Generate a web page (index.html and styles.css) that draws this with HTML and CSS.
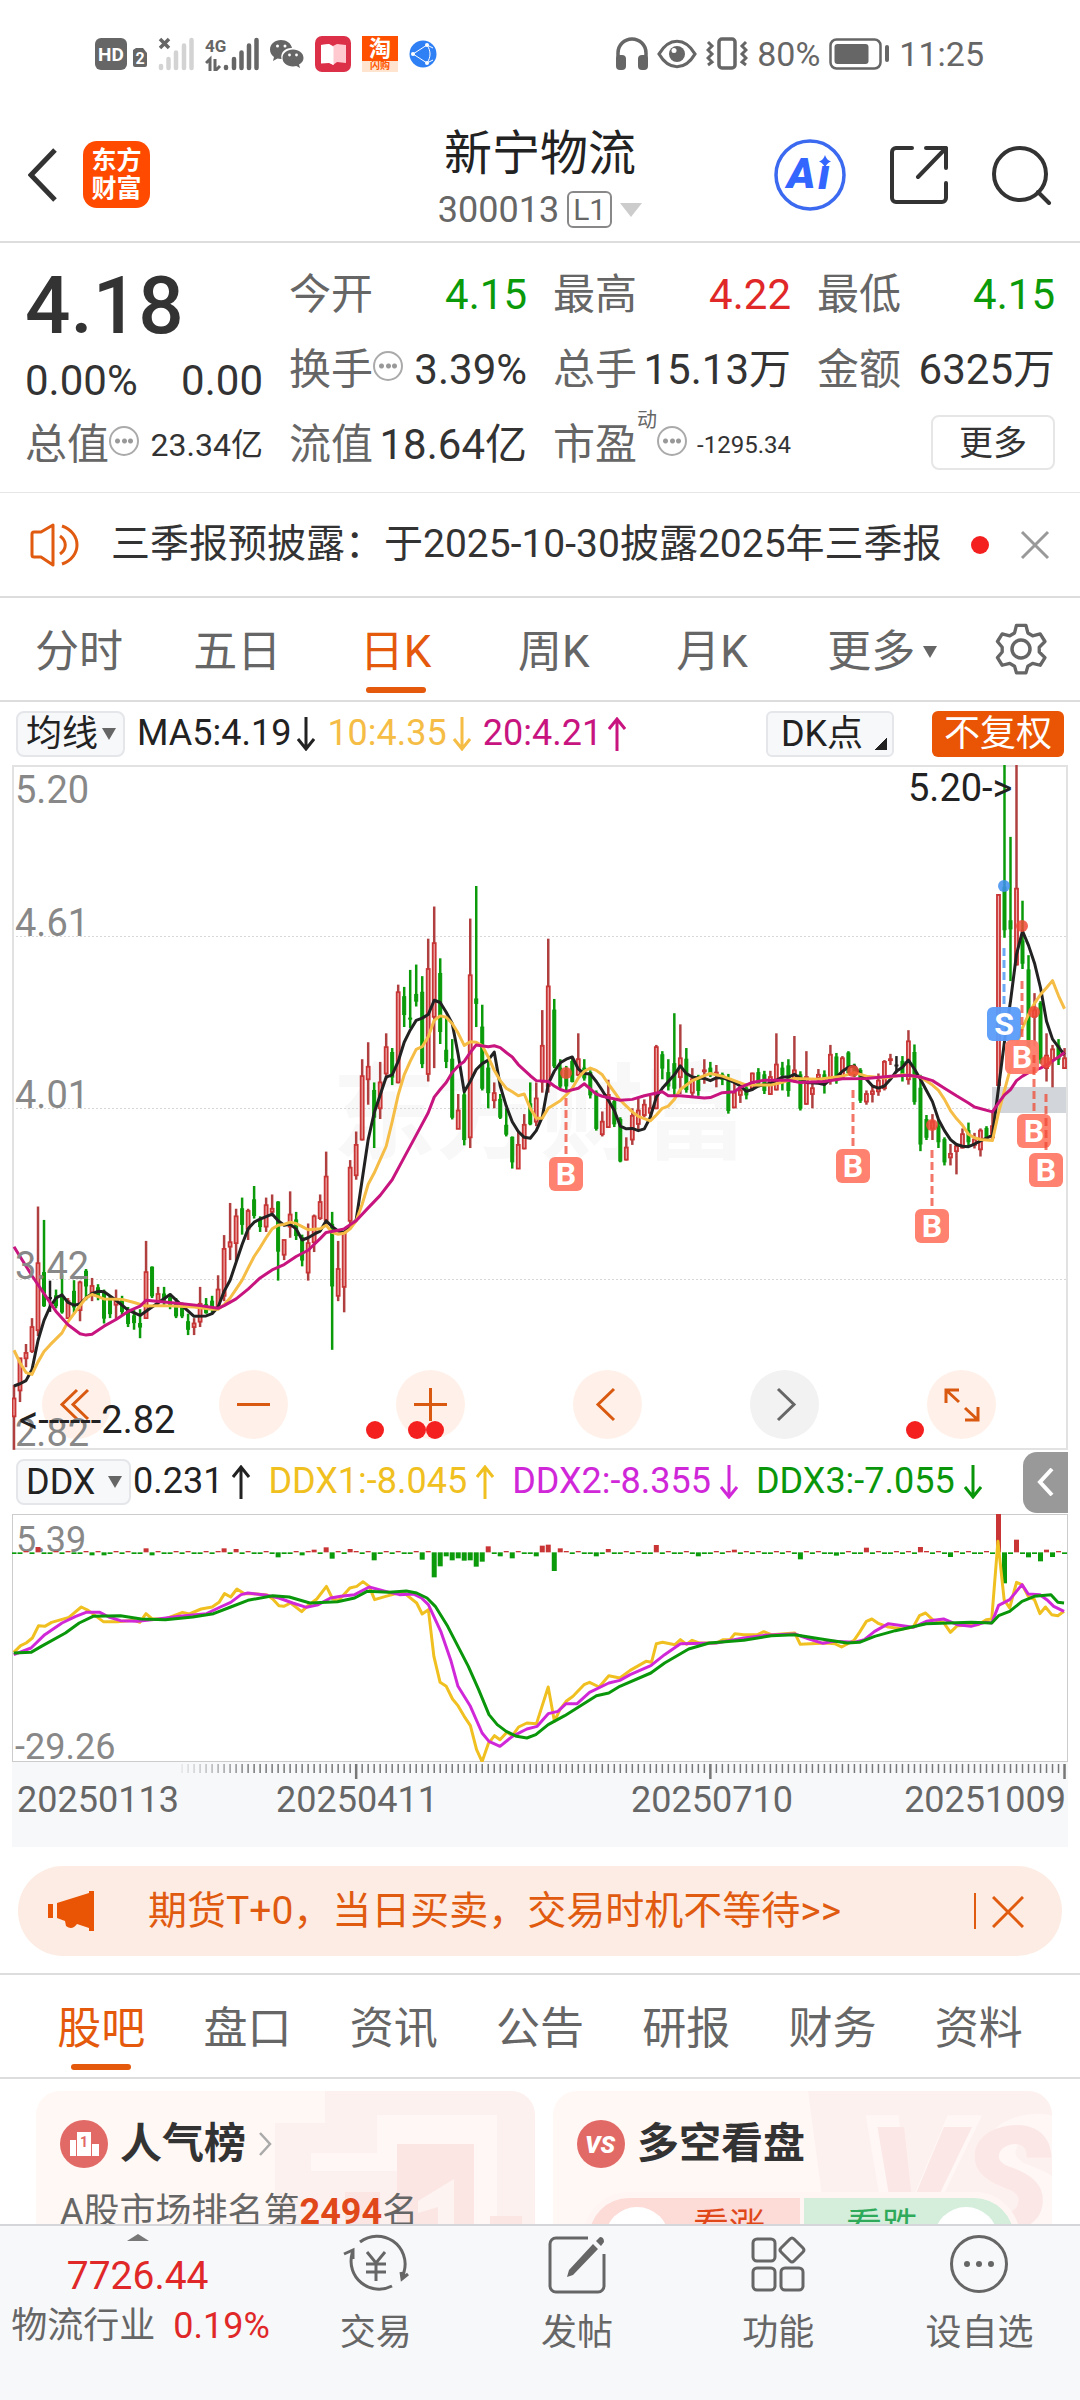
FILE: index.html
```html
<!DOCTYPE html>
<html lang="zh-CN">
<head>
    <meta charset="UTF-8">
    <meta name="viewport" content="width=device-width, initial-scale=1.0">
    <title>新宁物流 300013</title>
    <link rel="stylesheet" href="styles.css">
</head>
<body>
    <!-- Status bar -->
    <div class="status-bar">
        <div class="status-left">
            <svg width="52" height="32" viewBox="0 0 52 32">
                <rect width="32" height="32" rx="6" fill="#666"/>
                <text x="16" y="23" text-anchor="middle" class="hd-text">HD</text>
                <path d="M41 10h7l4 5v12a2 2 0 0 1-2 2h-10a2 2 0 0 1-2-2V12z" fill="#666"/>
                <text x="45" y="26" text-anchor="middle" class="sim-text">2</text>
            </svg>
            <svg width="36" height="34" viewBox="0 0 36 34">
                <path d="M2 2l9 9M11 2l-9 9" stroke="#666" stroke-width="3.5"/>
                <path d="M3 29v2M10.500 22v9M18 15.500v15.500M26 8.500v22.500M33.500 3v28" stroke="#d3d3d3" stroke-width="4.500" stroke-linecap="round"/>
            </svg>
            <svg width="54" height="34" viewBox="0 0 54 34">
                <text x="0" y="15" class="net-text">4G</text>
                <path d="M1 26l4-4v12M10 22v12l5-5" stroke="#666" stroke-width="3" fill="none"/>
                <path d="M21 30v1M29 22v9M36.500 15.500v15.500M44 8.500v22.500M51.500 3v28" stroke="#666" stroke-width="4.500" stroke-linecap="round"/>
            </svg>
            <svg width="34" height="30" viewBox="0 0 34 30">
                <path d="M11 1C5 1 0 5 0 10.500c0 3 1.500 5.500 4 7.500l-1 4 4.500-2.500c1.200.3 2.500.5 4 .4C10 13 16 8.500 22 9 21 4 16.500 1 11 1z" fill="#666"/>
                <path d="M23 10.500c-6 0-10.500 3.600-10.500 8.500S17 27.500 23 27.500c1.200 0 2.300-.2 3.400-.5L30 29l-1-3.500c2.800-1.500 4.500-3.800 4.500-6.500 0-4.900-4.500-8.500-10.500-8.500z" fill="#666"/>
                <g fill="#fff"><circle cx="7.500" cy="7" r="1.500"/><circle cx="15" cy="7" r="1.500"/><circle cx="19.500" cy="16" r="1.400"/><circle cx="26.500" cy="16" r="1.400"/></g>
            </svg>
            <svg width="36" height="36" viewBox="0 0 36 36">
                <rect width="36" height="36" rx="7" fill="#db3048"/>
                <path d="M6 9l8-1 4 2 4-2 9 1v18l-9-1-4 3-4-3-8 1z" fill="#ffc9cf"/>
                <path d="M6 9l8-1 4.500 3v18L14 27l-8 .5z" fill="#fff"/>
            </svg>
            <span class="app-tao"><b>淘</b><small>闪购</small></span>
            <svg width="28" height="28" viewBox="0 0 28 28">
                <circle cx="14" cy="14" r="13.500" fill="#2f80f5"/>
                <path d="M4 14L18 5M4 14l14 9M18 5c4 6 4 12 0 18M18 5l6 3M18 23l6-3" stroke="#fff" fill="none"/>
                <g fill="#fff"><circle cx="4" cy="14" r="2"/><circle cx="18" cy="5" r="2"/><circle cx="18" cy="23" r="2"/></g>
            </svg>
        </div>
        <div class="status-right">
            <svg width="32" height="33" viewBox="0 0 32 33">
                <path d="M2 26V16a14 14 0 0 1 28 0v10" fill="none" stroke="#666" stroke-width="3.500"/>
                <rect x="0" y="18" width="10" height="15" rx="4" fill="#666"/><rect x="22" y="18" width="10" height="15" rx="4" fill="#666"/>
            </svg>
            <svg width="40" height="30" viewBox="0 0 40 30">
                <path d="M2 15C12-2 28-2 38 15 28 32 12 32 2 15z" fill="none" stroke="#666" stroke-width="3.200"/>
                <circle cx="20" cy="15" r="8" fill="#666"/><circle cx="17" cy="11.500" r="2.500" fill="#fff"/>
            </svg>
            <svg width="42" height="33" viewBox="0 0 42 33">
                <rect x="13" y="2" width="16" height="29" rx="3" fill="none" stroke="#666" stroke-width="3.500"/>
                <path d="M2 5l4 4-4 4 4 4-4 4 4 4-4 3M40 5l-4 4 4 4-4 4 4 4-4 4 4 3" fill="none" stroke="#666" stroke-width="3"/>
            </svg>
            <span>80%</span>
            <svg width="61" height="32" viewBox="0 0 61 32">
                <rect x="1.500" y="1.500" width="50" height="29" rx="6" fill="none" stroke="#666" stroke-width="2.500"/>
                <rect x="5.500" y="6" width="34" height="20" rx="3" fill="#666"/><rect x="56" y="7" width="4" height="17" rx="2" fill="#666"/>
            </svg>
            <span class="clock">11:25</span>
        </div>
    </div>

    <!-- Header -->
    <header class="header">
        <div class="header-left">
            <button class="icon-btn" aria-label="返回">
                <svg width="30" height="54" viewBox="0 0 30 54"><path d="M27 2L3 27l24 25" fill="none" stroke="#333" stroke-width="5"/></svg>
            </button>
            <a href="#" class="logo"><span>东方</span><span>财富</span></a>
        </div>
        <div class="header-title">
            <h1>新宁物流</h1>
            <button class="code-btn">300013<span class="level">L1</span><i class="tri tri-big"></i></button>
        </div>
        <div class="header-right">
            <button class="icon-btn" aria-label="AI">
                <svg width="72" height="72" viewBox="0 0 72 72">
                    <circle cx="36" cy="36" r="34" fill="#fff" stroke="#3b69f0" stroke-width="3.500"/>
                    <text x="13" y="49" class="ai-text">A</text><text x="44" y="50" class="ai-text">ı</text>
                    <path d="M51 16q1.500 5 6 6.500-4.500 1.500-6 6.500-1.500-5-6-6.500 4.500-1.500 6-6.500z" fill="#3366ff"/>
                </svg>
            </button>
            <button class="icon-btn" aria-label="分享">
                <svg width="58" height="58" viewBox="0 0 58 58">
                    <path d="M22 2H6a4 4 0 0 0-4 4v46a4 4 0 0 0 4 4h46a4 4 0 0 0 4-4V37M36 2h20v20M56 2L28 31" fill="none" stroke="#333" stroke-width="4" stroke-linecap="round" stroke-linejoin="round"/>
                </svg>
            </button>
            <button class="icon-btn" aria-label="搜索">
                <svg width="60" height="60" viewBox="0 0 60 60">
                    <circle cx="28" cy="29" r="26" fill="none" stroke="#333" stroke-width="4"/>
                    <path d="M46 47l11 11" stroke="#333" stroke-width="4" stroke-linecap="round"/>
                </svg>
            </button>
        </div>
    </header>

    <!-- Quote -->
    <section class="quote">
        <div class="price">
            <strong>4.18</strong>
            <div class="change"><span>0.00%</span><span>0.00</span></div>
        </div>
        <div class="item"><span>今开</span><b class="down">4.15</b></div>
        <div class="item"><span>最高</span><b class="up">4.22</b></div>
        <div class="item"><span>最低</span><b class="down">4.15</b></div>
        <div class="item"><span>换手<i class="more-dot"></i></span><b>3.39%</b></div>
        <div class="item"><span>总手</span><b>15.13万</b></div>
        <div class="item"><span>金额</span><b>6325万</b></div>
        <div class="item"><span>总值<i class="more-dot"></i></span><b class="mid">23.34亿</b></div>
        <div class="item"><span>流值</span><b>18.64亿</b></div>
        <div class="item"><span>市盈<sup>动</sup><i class="more-dot after-sup"></i></span><b class="small">-1295.34</b></div>
        <div class="item last"><button class="more-btn">更多</button></div>
    </section>

    <!-- Notice -->
    <section class="notice">
        <svg width="50" height="44" viewBox="0 0 50 44" fill="none" stroke="#e05a10" stroke-width="3" stroke-linejoin="round">
            <path d="M2 11q0-2 2-2h7L23 2v40L11 34H4q-2 0-2-2zM30 13c7 5 7 13 0 18M32 3c20 7 20 31 0 38"/>
        </svg>
        <a href="#">三季报预披露：于2025-10-30披露2025年三季报</a>
        <i class="red-dot"></i>
        <button class="icon-btn" aria-label="关闭">
            <svg width="30" height="30" viewBox="0 0 30 30"><path d="M2 2l26 26M28 2L2 28" stroke="#999" stroke-width="3"/></svg>
        </button>
    </section>

    <!-- Period tabs -->
    <nav class="tabs period-tabs">
        <button>分时</button>
        <button>五日</button>
        <button class="active">日K</button>
        <button>周K</button>
        <button>月K</button>
        <button class="more-tab">更多<i class="tri"></i></button>
        <button class="gear" aria-label="设置">
            <svg width="52" height="54" viewBox="0 0 52 54" fill="none" stroke="#666" stroke-width="3.500" stroke-linejoin="round">
                <path d="M21 3h10l2 8 5 3 8-2 5 8-6 6v5l6 6-5 8-8-2-5 3-2 7H21l-2-7-5-3-8 2-5-8 5-6v-5l-5-6 5-8 8 2 5-3z" transform="translate(1.500 .5) scale(.95)"/>
                <circle cx="26" cy="27" r="9"/>
            </svg>
        </button>
    </nav>

    <!-- K line chart -->
    <section class="chart">
        <div class="legend">
            <label class="select"><select aria-label="主图指标"><option>均线</option></select></label>
            <span class="ma5">MA5:4.19<svg class="arrow" viewBox="0 0 18 34"><path d="M9 0v32M1 22l8 10 8-10"/></svg></span>
            <span class="ma10">10:4.35<svg class="arrow" viewBox="0 0 18 34"><path d="M9 0v32M1 22l8 10 8-10"/></svg></span>
            <span class="ma20">20:4.21<svg class="arrow" viewBox="0 0 18 34"><path d="M9 34V2M1 12L9 2l8 10"/></svg></span>
            <button class="dk-btn">DK点</button>
            <button class="adjust-btn">不复权</button>
        </div>
        <div class="plot">
            <div class="plot-tools">
                <button aria-label="最早"><svg viewBox="0 0 69 69"><path d="M35 20L20 34.500 35 49M46 20L31 34.500 46 49"/></svg></button>
                <button aria-label="缩小"><svg viewBox="0 0 69 69"><path d="M18 34.500h33"/></svg></button>
                <button aria-label="放大"><svg viewBox="0 0 69 69"><path d="M18 34.500h33M34.500 18v33"/></svg></button>
                <button aria-label="左移"><svg viewBox="0 0 69 69"><path d="M41 19L25 34.500 41 50"/></svg></button>
                <button aria-label="右移" class="off"><svg viewBox="0 0 69 69"><path d="M28 19l16 15.500L28 50"/></svg></button>
                <button aria-label="全屏"><svg viewBox="0 0 69 69"><path d="M19 33V20h13M19 20l13 12M51 37v13H38M51 50L38 38"/></svg></button>
            </div>
            <svg id="kline" viewBox="0 0 1056 685"></svg>
        </div>
        <div class="legend ddx-legend">
            <label class="select"><select aria-label="副图指标"><option>DDX</option></select></label>
            <span class="ma5">0.231<svg class="arrow" viewBox="0 0 18 34"><path d="M9 34V2M1 12L9 2l8 10"/></svg></span>
            <span class="ddx1">DDX1:-8.045<svg class="arrow" viewBox="0 0 18 34"><path d="M9 34V2M1 12L9 2l8 10"/></svg></span>
            <span class="ddx2">DDX2:-8.355<svg class="arrow" viewBox="0 0 18 34"><path d="M9 0v32M1 22l8 10 8-10"/></svg></span>
            <span class="ddx3">DDX3:-7.055<svg class="arrow" viewBox="0 0 18 34"><path d="M9 0v32M1 22l8 10 8-10"/></svg></span>
            <button class="drawer-btn" aria-label="展开">
                <svg width="18" height="28" viewBox="0 0 18 28"><path d="M15 1L3 14l12 13" fill="none" stroke="#fff" stroke-width="4"/></svg>
            </button>
        </div>
        <svg id="ddx" viewBox="0 0 1056 248"></svg>
        <svg id="axis" viewBox="0 0 1056 85"></svg>
    </section>

    <!-- Banner -->
    <aside class="banner">
        <svg width="46" height="40" viewBox="0 0 46 40" fill="#e95504"><path d="M0 13h5v14H0zM9 12L41 2V0h5v40h-5v-3l-12-4q-5 7-11 2l-1-5-8-3z"/></svg>
        <a href="#">期货T+0，当日买卖，交易时机不等待&gt;&gt;</a>
        <button class="icon-btn" aria-label="关闭">
            <svg width="32" height="32" viewBox="0 0 32 32"><path d="M1 1l30 30M31 1L1 31" stroke="#e05a10" stroke-width="3"/></svg>
        </button>
    </aside>

    <!-- Info tabs -->
    <nav class="tabs info-tabs">
        <button class="active">股吧</button>
        <button>盘口</button>
        <button>资讯</button>
        <button>公告</button>
        <button>研报</button>
        <button>财务</button>
        <button>资料</button>
    </nav>

    <main class="cards">
        <article class="card">
            <svg class="card-bg" width="260" height="150" viewBox="0 0 260 150">
                <path d="M50 0h210v150H0V32h50z" fill="#fdf1ef"/>
                <path d="M102 24h120v126h-90V80H36V62h66z" fill="#fef7f5"/>
                <path d="M122 53h77v97h-77zM70 101h35v49H70zM215 125h32v25h-32z" fill="#fbe6e4"/>
                <path d="M143 110l36-22v62h-16v-34l-20 6z" fill="#fdf3f1"/>
            </svg>
            <h2>
                <svg width="48" height="48" viewBox="0 0 48 48">
                    <circle cx="24" cy="24" r="24" fill="#e26a66"/>
                    <path d="M17 12h14v24H17zM10 20h6v16h-6zM32 24h7v12h-7z" fill="#fff"/>
                    <text x="24" y="27" text-anchor="middle" class="rank-text">1</text>
                </svg>
                人气榜
                <svg width="14" height="24" viewBox="0 0 14 24"><path d="M2 1l10 11L2 23" fill="none" stroke="#aaa" stroke-width="2.500"/></svg>
            </h2>
            <p>A股市场排名第<b>2494</b>名</p>
        </article>
        <article class="card">
            <svg class="card-bg" width="244" height="150" viewBox="0 0 244 150">
                <path d="M0 0h244v150H20z" fill="#fdf1ef"/>
                <text x="46" y="152" class="vs-shadow">VS</text>
                <text x="60" y="140" class="vs-bg">VS</text>
            </svg>
            <h2>
                <svg width="48" height="48" viewBox="0 0 48 48">
                    <circle cx="24" cy="24" r="24" fill="#e26a66"/>
                    <text x="23" y="33" text-anchor="middle" class="vs-text">VS</text>
                </svg>
                多空看盘
            </h2>
            <div class="vote">
                <button class="bull"><i></i>看涨</button>
                <button class="bear">看跌<i></i></button>
            </div>
        </article>
    </main>

    <!-- Bottom bar -->
    <footer class="bottom-bar">
        <a href="#" class="index">
            <i class="tri-up"></i>
            <span class="index-value">7726.44</span>
            <span class="index-name">物流行业<b>0.19%</b></span>
        </a>
        <a href="#">
            <svg viewBox="0 0 66 60">
                <path d="M17 8a28 28 0 0 1 44 30l-1 5M49 52A28 28 0 0 1 9 20l1-3M1 20l9-4v9M65 40l-6 5-1-7M24 18l9 11 9-11M33 29v18M23 30h20M23 38h20"/>
            </svg>
            交易
        </a>
        <a href="#">
            <svg viewBox="0 0 66 60">
                <path d="M44 4H12a6 6 0 0 0-6 6v42a6 6 0 0 0 6 6h42a6 6 0 0 0 6-6V20"/>
                <path d="M49 10l5 5-25 26-6 2 2-7zM52 7l4-4q4 0 4 5l-3 4z" fill="#666" stroke="none"/>
            </svg>
            发帖
        </a>
        <a href="#">
            <svg viewBox="0 0 66 60">
                <rect x="8" y="5" width="22" height="22" rx="4"/><rect x="8" y="34" width="22" height="22" rx="4"/><rect x="36" y="34" width="22" height="22" rx="4"/>
                <path d="M45 5q2-2 4 0l9 9q2 2 0 4l-9 9q-2 2-4 0l-9-9q-2-2 0-4z"/>
            </svg>
            功能
        </a>
        <a href="#">
            <svg viewBox="0 0 66 60">
                <circle cx="33" cy="30" r="27.500"/>
                <g fill="#666" stroke="none"><circle cx="21" cy="30" r="3"/><circle cx="33" cy="30" r="3"/><circle cx="45" cy="30" r="3"/></g>
            </svg>
            设自选
        </a>
    </footer>

    <script src="chart.js"></script>
</body>
</html>
```

FILE: styles.css
```css
* {
    box-sizing: border-box;
}
body {
    margin: 0;
    height: 100vh;
    display: flex;
    flex-direction: column;
    overflow: hidden;
    background: #fff;
    color: #333;
    font-family: Roboto, "Noto Sans CJK SC", sans-serif;
    line-height: 1.2;
}
body > * {
    flex-shrink: 0;
}
button, select {
    font: inherit;
    color: inherit;
    border: 0;
    padding: 0;
    margin: 0;
    background: none;
    cursor: pointer;
}
a {
    color: inherit;
    text-decoration: none;
}
h1, h2, p {
    margin: 0;
}
svg {
    display: block;
}
.icon-btn {
    display: block;
}

/* triangles */
.tri {
    display: inline-block;
    border: 7px solid transparent;
    border-top: 12px solid #666;
    border-bottom: 0;
}
.tri-big {
    border-width: 14px 11px 0;
    border-top-color: #ccc;
}

/* status bar */
.status-bar {
    height: 108px;
    padding: 0 96px 0 95px;
    display: flex;
    align-items: center;
    justify-content: space-between;
    color: #666;
    font-size: 34px;
}
.status-left, .status-right {
    display: flex;
    align-items: center;
    gap: 11px;
}
.status-right {
    gap: 9px;
}
.hd-text, .sim-text {
    fill: #fff;
    font-weight: 700;
    font-size: 19px;
}
.sim-text {
    font-size: 16px;
}
.net-text {
    fill: #666;
    font-weight: 700;
    font-size: 17px;
}
.app-tao {
    width: 36px;
    height: 36px;
    display: flex;
    flex-direction: column;
    align-items: center;
    background: linear-gradient(#ff5000 70%, #ffe5cf 70%);
    color: #fff;
    line-height: 25px;
}
.app-tao b {
    font-size: 22px;
}
.app-tao small {
    font-size: 10px;
    line-height: 10px;
    color: #f50;
    font-weight: 700;
}

/* header */
.header {
    height: 135px;
    padding: 0 28px;
    display: grid;
    grid-template-columns: 1fr auto 1fr;
    align-items: center;
    border-bottom: 2px solid #ddd;
}
.header-left {
    display: flex;
    align-items: center;
    gap: 25px;
}
.logo {
    width: 67px;
    height: 67px;
    border-radius: 14px;
    background: #ff4a00;
    color: #fff;
    font-size: 25px;
    font-weight: 700;
    line-height: 28px;
    display: flex;
    flex-direction: column;
    align-items: center;
    justify-content: center;
}
.header-title {
    padding-top: 10px;
    text-align: center;
}
.header-title h1 {
    font-size: 48px;
    font-weight: 400;
    line-height: 60px;
    color: #222;
}
.code-btn {
    display: flex;
    align-items: center;
    gap: 8px;
    font-size: 36px;
    line-height: 52px;
    color: #666;
}
.level {
    padding: 0 4px;
    border: 2px solid #888;
    border-radius: 6px;
    font-size: 30px;
    line-height: 33px;
}
.header-right {
    display: flex;
    align-items: center;
    justify-content: flex-end;
    gap: 44px;
}
.ai-text {
    fill: #3366ff;
    font-size: 43px;
    font-weight: 900;
    font-style: italic;
}

/* quote */
.quote {
    padding: 15px 25px 9px;
    display: grid;
    grid-template-columns: repeat(4, 1fr);
    grid-auto-rows: 75px;
    column-gap: 26px;
    font-size: 42px;
    border-bottom: 1px solid #e6e6e6;
}
.price {
    grid-row: span 2;
    padding-top: 6px;
}
.price strong {
    display: block;
    font-size: 80px;
    font-weight: 500;
    line-height: 84px;
}
.change {
    display: flex;
    justify-content: space-between;
    line-height: 66px;
}
.item {
    display: flex;
    align-items: center;
    justify-content: space-between;
    white-space: nowrap;
}
.item span {
    position: relative;
    display: flex;
    align-items: center;
    color: #666;
}
.item b {
    font-weight: 400;
}
.item.last {
    justify-content: flex-end;
}
.item .mid {
    font-size: 32px;
}
.item .small {
    font-size: 24px;
}
.item .up {
    color: #e02828;
}
.item .down {
    color: #0a9a0a;
}
.item sup {
    align-self: flex-start;
    margin-top: -10px;
    font-size: 20px;
    line-height: 20px;
}
.more-dot {
    width: 30px;
    height: 30px;
    margin: 0 0 8px;
    border: 2px solid #aaa;
    border-radius: 50%;
    background: radial-gradient(circle, #999 2px, transparent 3px) center / 7px 100% no-repeat,
        radial-gradient(circle, #999 2px, transparent 3px) 3px 50% / 7px 100% no-repeat,
        radial-gradient(circle, #999 2px, transparent 3px) 16px 50% / 7px 100% no-repeat;
}
.more-btn {
    width: 124px;
    height: 55px;
    margin-bottom: 6px;
    border: 2px solid #e6e6e6;
    border-radius: 8px;
    font-size: 34px;
    line-height: 48px;
}

/* notice */
.notice {
    height: 105px;
    padding: 0 30px;
    display: flex;
    align-items: center;
    border-bottom: 2px solid #ddd;
    font-size: 39px;
}
.notice a {
    flex: 1;
    margin-left: 31px;
    white-space: nowrap;
}
.red-dot {
    width: 18px;
    height: 18px;
    margin-right: 31px;
    border-radius: 50%;
    background: #f42020;
}

/* tabs */
.tabs {
    display: flex;
    height: 104px;
    border-bottom: 2px solid #ddd;
    font-size: 44px;
    color: #666;
}
.tabs button {
    position: relative;
    flex: 8;
    display: flex;
    align-items: center;
    justify-content: center;
    gap: 8px;
    padding-top: 6px;
}
.tabs .more-tab {
    padding-left: 12px;
}
.tabs .gear {
    flex: 6;
    padding-top: 0;
}
.tabs .active {
    color: #e4590c;
}
.tabs .active::after {
    content: "";
    position: absolute;
    left: 50%;
    bottom: 7px;
    width: 60px;
    height: 6px;
    margin-left: -30px;
    border-radius: 3px;
    background: #e4590c;
}
.info-tabs {
    height: 106px;
    padding: 0 28px;
    border-top: 2px solid #ddd;
}

/* chart */
.chart {
    padding: 0 12px;
}
.chart > svg, .plot > svg {
    width: 100%;
    height: auto;
}
.legend {
    height: 63px;
    padding-left: 4px;
    display: flex;
    align-items: center;
    gap: 12px;
    font-size: 36px;
    white-space: nowrap;
    color: #222;
}
.legend span {
    display: flex;
    align-items: center;
}
.select {
    position: relative;
    height: 46px;
    border: 2px solid #e4e6ea;
    border-radius: 8px;
    background: #f7f8fa;
}
.select select {
    height: 42px;
    padding: 0 24px 0 8px;
    appearance: none;
}
.select::after {
    content: "";
    position: absolute;
    right: 7px;
    top: 15px;
    border: 7px solid transparent;
    border-top: 12px solid #666;
    border-bottom: 0;
    pointer-events: none;
}
.arrow {
    width: 18px;
    height: 34px;
    margin-left: 6px;
    fill: none;
    stroke: currentColor;
    stroke-width: 3;
}
.ma10 {
    color: #f5bd45;
}
.ma20 {
    color: #c8147f;
}
.dk-btn, .adjust-btn {
    height: 46px;
    border-radius: 6px;
    line-height: 40px;
}
.dk-btn {
    width: 128px;
    margin-left: auto;
    padding-right: 16px;
    border: 2px solid #e4e6ea;
    background: linear-gradient(135deg, transparent 50%, #222 50%) right 5px bottom 5px / 12px 12px no-repeat #f7f8fa;
}
.adjust-btn {
    width: 132px;
    margin: 0 4px 0 26px;
    background: #e95504;
    color: #fff;
}
.ddx-legend {
    height: 64px;
    gap: 18px;
}
.ddx-legend .select {
    margin-right: -16px;
}
.ddx-legend .select select {
    padding-right: 33px;
}
.ddx-legend .arrow {
    margin-left: 9px;
}
.ddx1 {
    color: #f0c020;
}
.ddx2 {
    color: #d028d8;
}
.ddx3 {
    color: #0a960a;
}
.drawer-btn {
    width: 45px;
    height: 61px;
    margin-left: auto;
    display: flex;
    align-items: center;
    justify-content: center;
    border-radius: 14px 0 0 14px;
    background: #999;
}
.plot {
    position: relative;
}
.plot > svg {
    position: relative;
    pointer-events: none;
}
.plot-tools {
    position: absolute;
    left: 30px;
    right: 72px;
    bottom: 11px;
    display: flex;
    justify-content: space-between;
}
.plot-tools button {
    width: 69px;
    height: 69px;
    border-radius: 50%;
    background: #fff1e9;
}
.plot-tools path {
    fill: none;
    stroke: #d8590f;
    stroke-width: 3;
}
.plot-tools .off {
    background: #f2f2f2;
}
.plot-tools .off path {
    stroke: #666;
}
.scale-text {
    fill: #888;
    font-size: 38px;
}
.mark-text {
    fill: #222;
    font-size: 38px;
}
.ddx-text {
    fill: #888;
    font-size: 36px;
}
.date-text {
    fill: #666;
    font-size: 36px;
}
.badge-text {
    fill: #fff;
    font-size: 32px;
    font-weight: 700;
}
.watermark {
    fill: #f8f8f8;
    font-size: 104px;
    font-weight: 700;
}
#axis {
    background: #f7f8fa;
}

/* banner */
.banner {
    height: 90px;
    margin: 19px 18px 17px;
    padding: 0 38px 0 30px;
    display: flex;
    align-items: center;
    border-radius: 45px;
    background: #fdece3;
    color: #e05a10;
    font-size: 39px;
}
.banner a {
    flex: 1;
    margin-left: 54px;
}
.banner button {
    height: 36px;
    padding: 2px 0 0 16px;
    border-left: 2px solid #e05a10;
}

/* cards */
.cards {
    flex: 1;
    min-height: 0;
    padding: 12px 28px 0 36px;
    display: grid;
    grid-template-columns: 1fr 1fr;
    gap: 18px;
    overflow: hidden;
}
.card {
    position: relative;
    height: 300px;
    padding: 24px;
    border-radius: 24px;
    overflow: hidden;
    background: #fff8f5;
}
.card-bg {
    position: absolute;
    top: 0;
    right: 0;
}
.card h2 {
    position: relative;
    display: flex;
    align-items: center;
    gap: 12px;
    height: 58px;
    font-size: 42px;
    font-weight: 700;
}
.card p {
    position: relative;
    margin-top: 12px;
    font-size: 36px;
    line-height: 54px;
    color: #666;
}
.card p b {
    color: #e0481a;
}
.rank-text {
    fill: #e26a66;
    font-size: 14px;
    font-weight: 700;
}
.vs-text {
    fill: #fff;
    font-size: 24px;
    font-weight: 900;
    font-style: italic;
}
.vs-bg, .vs-shadow {
    fill: #fbe7e5;
    font-size: 146px;
    font-weight: 900;
    font-style: italic;
}
.vs-shadow {
    fill: #fef7f5;
    font-size: 180px;
}
.vote {
    position: relative;
    display: flex;
    margin: 19px 8px 0 6px;
    border: 6px solid #fff6f4;
    border-radius: 50px;
    overflow: hidden;
    font-size: 36px;
    background: #fff6f4;
    gap: 4px;
}
.vote button {
    flex: 1;
    height: 80px;
    padding: 9px 16px 0;
    display: flex;
    align-items: flex-start;
    gap: 24px;
    line-height: 40px;
}
.vote i {
    width: 64px;
    height: 64px;
    border-radius: 50%;
    background: #fff;
}
.bull {
    background: #fddcd8;
    color: #e0481a;
}
.vote .bear {
    justify-content: flex-end;
    gap: 16px;
    background: #d4eedb;
    color: #2fa95a;
}

/* bottom bar */
.bottom-bar {
    height: 176px;
    display: flex;
    border-top: 2px solid #d4d6da;
    background: #f7f8fa;
    color: #666;
    font-size: 36px;
}
.bottom-bar a {
    flex: 201;
    padding-top: 8px;
    display: flex;
    flex-direction: column;
    align-items: center;
    gap: 14px;
    line-height: 50px;
}
.bottom-bar .index {
    flex: 275;
    gap: 0;
    line-height: 50px;
    white-space: nowrap;
}
.bottom-bar svg {
    width: 66px;
    height: 60px;
    fill: none;
    stroke: #666;
    stroke-width: 3;
}
.tri-up {
    border: 11px solid transparent;
    border-bottom: 7px solid #777;
    border-top: 0;
    margin-bottom: 10px;
}
.index-value {
    font-size: 39px;
    color: #e02828;
}
.index-name {
    padding-left: 6px;
}
.index-name b {
    margin-left: 18px;
    font-weight: 400;
    color: #e02828;
}
```

FILE: chart.js
```javascript
const STEP = 6.003;
const RED = '#c93434';
const GREEN = '#0a9a0a';

function add(svg, tag, attrs, text) {
    const el = document.createElementNS('http://www.w3.org/2000/svg', tag);
    for (const key in attrs) el.setAttribute(key, attrs[key]);
    if (text) el.textContent = text;
    svg.appendChild(el);
    return el;
}

// one candle: colour, high, body top, body bottom, low (depth units, 11 = top of plot, 1545 = bottom)
const candles = `r 1400 1430 1470 1545|r 1340 1340 1412 1438|r 1308 1328 1340 1360|r 1250 1270 1324 1328|r 1000 1127 1277 1290
g 1030 1148 1222 1225|k 1166 1204 1205 1236|g 1186 1200 1222 1228|g 1152 1200 1236 1240|r 1205 1212 1250 1252
g 1165 1190 1225 1240|r 1166 1170 1232 1257|g 1140 1145 1178 1210|r 1160 1178 1192 1212|g 1174 1182 1200 1210
g 1186 1195 1250 1262|g 1200 1205 1240 1250|r 1186 1212 1220 1252|g 1200 1210 1235 1245|g 1225 1232 1262 1270
g 1232 1245 1260 1276|g 1230 1262 1270 1295|r 1077 1147 1250 1252|g 1134 1136 1200 1205|r 1180 1196 1212 1225
g 1180 1196 1210 1222|g 1195 1205 1222 1230|g 1205 1215 1245 1250|g 1215 1222 1245 1250|g 1240 1258 1275 1288
r 1250 1262 1270 1288|r 1180 1218 1258 1270|g 1205 1220 1238 1240|g 1200 1212 1230 1240|r 1154 1186 1225 1230
r 1064 1095 1200 1212|r 992 1080 1090 1120|r 1005 1022 1082 1122|g 980 1005 1040 1063|r 1005 1010 1050 1075
g 954 985 1020 1027|g 1022 1030 1045 1057|r 980 997 1045 1057|r 973 1005 1012 1022|g 988 990 1100 1166
r 1075 1075 1108 1120|r 966 1018 1045 1070|g 1012 1030 1065 1075|g 1063 1070 1120 1134|r 1038 1082 1148 1166
r 1018 1022 1080 1102|r 973 990 1026 1030|r 877 933 1030 1045|g 1012 1040 1178 1321|r 1077 1140 1200 1212
r 1055 1060 1180 1237|r 896 913 1032 1045|r 832 862 930 940|r 670 708 850 852|r 632 687 715 772
g 722 740 800 869|r 676 722 780 804|r 612 643 702 715|g 645 655 710 728|r 503 520 722 724
g 508 530 570 598|g 470 578 580 600|g 458 525 540 552|g 484 520 680 690|r 400 468 703 720
r 328 410 575 690|g 444 478 608 636|g 575 650 675 690|g 625 670 800 805|r 748 785 826 826
g 740 750 850 863|r 355 482 845 869|g 282 535 545 598|g 548 598 735 740|g 670 690 745 780
r 722 746 762 780|g 748 760 800 804|g 780 818 838 843|g 843 845 900 915|r 830 862 915 915
r 793 817 870 872|g 722 770 815 818|r 722 758 810 820|r 560 640 720 745|r 400 507 730 745
g 535 560 685 690|g 670 690 730 735|g 685 695 730 740|g 668 675 720 722|r 612 670 705 708
g 670 690 712 718|g 695 700 750 758|g 740 745 825 830|r 787 810 838 843|r 716 750 822 824
g 760 765 815 822|g 800 805 898 901|r 845 868 895 897|r 780 797 850 862|r 758 785 815 830
r 760 772 795 800|r 752 780 790 800|r 638 643 780 782|g 652 660 690 715|g 670 700 730 740
g 567 680 735 752|r 592 668 710 748|g 645 670 738 745|r 690 715 745 757|g 705 710 740 752
r 670 695 697 725|g 676 690 705 710|r 683 700 702 733|g 700 705 715 728|g 703 720 785 792
r 720 745 778 780|r 735 740 750 768|g 725 735 750 760|r 700 702 735 740|g 690 700 730 733
g 696 705 740 748|r 696 710 748 750|r 612 682 738 740|g 676 690 705 740|g 670 685 740 754
r 618 695 715 722|g 697 705 780 785|r 652 710 770 772|r 718 735 748 780|r 692 705 712 722
g 695 705 725 747|r 638 660 710 727|g 656 665 718 725|r 663 668 710 712|g 652 656 700 702
g 680 690 705 710|g 690 695 762 768|r 740 748 765 772|r 732 742 748 767|r 702 718 742 752
r 672 676 735 740|r 658 670 672 683|k 663 683 684 700|g 663 675 705 720|r 605 630 715 727
g 637 655 765 772|g 705 735 860 876|g 795 805 845 851|r 793 810 825 851|g 805 820 855 869
g 845 850 900 908|r 860 882 890 908|r 858 865 876 928|r 825 838 868 870|g 812 830 855 865
r 835 850 862 870|r 825 830 872 888|g 820 825 845 850|r 790 820 845 850|r 300 302 728 730
g 11 285 380 398|g 172 360 378 495|r 11 288 458 460|g 315 405 455 468|g 437 470 650 660
r 522 560 575 640|g 540 545 670 680|r 612 662 690 720|r 638 648 672 733|g 625 640 670 683
r 645 668 690 690`.split(/[|\n]/);

// moving averages: day index, depth
const averages = {
    '#222': '0 1402,1 1397,2 1390,3 1365,4 1300,5 1255,6 1225,7 1205,8 1198,9 1215,10 1221,11 1218,12 1205,13 1195,14 1190,15 1191,17 1210,19 1232,21 1244,23 1225,26 1197,28 1222,30 1246,32 1245,33 1240,34 1225,35 1190,36 1165,37 1125,38 1085,39 1050,40 1035,41 1028,43 1017,44 1032,45 1042,46 1040,47 1050,48 1075,49 1070,50 1062,51 1055,52 1032,53 1045,54 1055,55 1058,56 1045,57 1030,58 940,59 850,60 790,61 750,62 710,63 705,64 675,65 632,66 605,67 583,68 578,69 570,70 538,71 543,72 565,73 590,74 660,75 743,76 720,77 693,78 680,79 672,80 654,81 730,82 775,83 810,84 832,85 845,86 847,87 830,88 800,89 725,90 697,91 678,92 670,93 665,94 692,95 702,96 703,97 720,98 740,99 762,100 785,101 820,102 826,103 825,104 830,105 826,106 800,107 755,108 735,109 720,110 705,111 685,112 702,113 710,114 712,115 713,116 718,117 712,118 711,120 722,121 730,122 742,123 738,124 730,126 724,128 710,129 710,130 704,131 712,132 722,134 724,135 727,136 715,137 710,138 697,139 688,140 685,141 705,142 715,143 730,144 735,145 730,146 715,147 697,148 688,149 672,150 692,151 715,152 740,153 765,154 805,155 830,156 850,157 861,158 865,159 866,160 860,161 853,162 847,163 840,164 735,165 630,166 540,167 435,168 383,169 415,170 455,171 510,172 585,173 625,174 643,175 660',
    '#f5bd45': '0 1322,1 1350,2 1372,3 1376,4 1348,5 1325,6 1310,8 1283,9 1258,10 1240,11 1222,12 1205,13 1197,15 1207,18 1208,20 1215,22 1223,25 1222,30 1225,33 1230,34 1230,35 1220,36 1205,37 1185,38 1165,39 1138,40 1112,41 1092,42 1070,43 1050,44 1042,45 1040,46 1035,47 1038,48 1045,49 1052,51 1050,52 1042,53 1058,54 1062,55 1060,56 1050,57 1032,58 995,59 950,60 925,61 895,62 865,63 810,64 750,65 705,66 675,67 648,68 642,69 620,70 583,71 573,72 576,73 590,74 612,75 639,76 631,77 632,78 640,79 665,80 695,81 718,82 735,83 743,84 752,85 748,86 780,87 802,88 802,89 780,91 763,92 750,93 735,94 712,95 697,96 690,97 695,98 705,99 725,101 762,102 775,103 788,104 798,106 808,107 795,108 780,109 775,110 760,111 738,113 718,115 707,116 702,118 708,120 718,122 728,124 728,126 728,128 722,130 713,134 715,138 708,140 700,142 708,145 712,148 705,151 710,153 728,154 740,155 760,156 785,157 803,158 818,159 838,160 846,161 850,163 852,164 790,165 740,166 690,167 640,168 600,169 570,170 545,171 525,172 510,173 494,174 528,175 557',
    '#c8147f': '0 1090,1 1112,3 1155,5 1195,7 1235,9 1265,11 1285,12 1288,13 1286,15 1268,17 1253,19 1235,21 1223,22 1210,25 1214,28 1218,31 1222,34 1228,35 1222,37 1207,39 1185,41 1160,43 1142,45 1130,47 1112,49 1098,51 1072,52 1058,54 1053,55 1050,57 1032,59 1003,61 975,63 940,65 890,67 840,69 790,70 755,71 738,72 722,73 700,74 685,75 675,76 655,77 638,79 642,80 640,81 644,82 655,83 665,84 682,86 707,87 718,89 720,90 730,91 738,92 742,94 735,95 725,97 748,98 753,101 762,103 760,105 752,108 743,109 752,111 752,115 757,116 756,118 745,120 743,121 733,123 722,125 717,129 717,131 722,135 720,138 714,142 713,146 708,149 706,151 710,153 718,155 735,157 752,159 768,160 777,163 788,164 768,165 750,166 738,167 718,168 708,169 700,171 690,172 683,174 665,175 655'
};

// buy / sell marks: letter, x, dot y, badge top
const marks = [
    ['B', 554, 308, 392], ['B', 841, 306, 384], ['B', 920, 360, 444],
    ['S', 992, 121, 242], ['B', 1010, 161, 275], ['B', 1022, 247, 349], ['B', 1034, 297, 388]
];

const dayX = i => 2 + i * STEP;
const depthY = v => (v - 11) / 2.24;

function drawKline() {
    const svg = document.getElementById('kline');
    add(svg, 'text', { x: 320, y: 386, class: 'watermark' }, '东方财富');
    [171, 343, 514].forEach(y => add(svg, 'path', { d: `M0 ${y}.500H1056`, stroke: '#d8d8d8', 'stroke-dasharray': '2 2' }));
    add(svg, 'rect', { x: 980, y: 322, width: 75, height: 26, fill: '#d2d6da' });
    add(svg, 'rect', { x: 1, y: 1, width: 1054, height: 683, fill: 'none', stroke: '#e2e2e2', 'stroke-width': 2 });

    candles.forEach((row, i) => {
        const [c, ...v] = row.split(' ');
        const [high, top, bottom, low] = v.map(n => depthY(+n));
        const x = dayX(i);
        const color = { r: RED, g: GREEN, k: '#222' }[c];
        add(svg, 'path', { d: `M${x} ${high}V${low}`, stroke: c === 'r' ? '#b04040' : color, 'stroke-width': 2.5 });
        add(svg, 'rect', {
            x: x - 1.5, y: top, width: 3, height: Math.max(1, bottom - top),
            fill: c === 'r' ? '#eeb0b0' : color, stroke: color, 'stroke-width': c === 'r' ? 1.8 : 1
        });
    });

    for (const color in averages) {
        const points = averages[color].split(',').map(p => {
            const [i, v] = p.split(' ');
            return dayX(+i) + ',' + depthY(+v);
        }).join(' ');
        add(svg, 'polyline', { points, fill: 'none', stroke: color, 'stroke-width': 3, 'stroke-linejoin': 'round' });
    }

    marks.forEach(([t, x, dot, top]) => {
        const color = t === 'S' ? '#3d8ef0' : '#f04a36';
        add(svg, 'circle', { cx: x, cy: dot, r: 6, fill: color, opacity: .85 });
        add(svg, 'path', { d: `M${x} ${top - 59}V${top}`, stroke: color, 'stroke-width': 3, 'stroke-dasharray': '8 4', opacity: .75 });
        add(svg, 'rect', { x: x - 17, y: top, width: 34, height: 34, rx: 6, fill: t === 'S' ? '#5a9cfa' : '#ff7a68', opacity: .95 });
        add(svg, 'text', { x, y: top + 28, 'text-anchor': 'middle', class: 'badge-text' }, t);
    });

    [['5.20', 38], ['4.61', 171], ['4.01', 343], ['3.42', 514], ['2.82', 681]].forEach(([t, y]) =>
        add(svg, 'text', { x: 3, y, class: 'scale-text' }, t));
    add(svg, 'text', { x: 896, y: 36, class: 'mark-text' }, '5.20->');
    add(svg, 'text', { x: 7, y: 668, class: 'mark-text' }, '<------2.82');
    [363, 405, 423, 903].forEach(x => add(svg, 'circle', { cx: x, cy: 665, r: 9, fill: '#f42020' }));
}

// tall ddx bars: day index, end of the bar (zero line is 338)
const bars = {
    4: 322, 13: 347, 15: 347, 22: 326, 23: 347, 35: 326, 37: 328, 44: 353, 48: 347, 50: 330, 52: 323, 53: 357, 56: 328,
    60: 362, 68: 360, 70: 413, 71: 380, 72: 350, 73: 362, 74: 356, 75: 363, 76: 362, 77: 381, 78: 366, 79: 320, 81: 350,
    83: 356, 87: 350, 88: 318, 89: 315, 90: 394, 91: 326, 97: 350, 99: 328, 107: 316, 114: 350, 120: 330, 131: 359,
    137: 348, 142: 324, 151: 322, 156: 352, 164: 223, 165: 431, 167: 300, 169: 353, 171: 365, 172: 330, 173: 352
};

const ddxLines = {
    '#f0c020': '20,638 30,618 38,610 47,595 56,558 65,560 75,548 100,533 118,502 128,512 150,546 170,546 195,542 203,548 212,522 221,538 240,538 265,518 275,523 292,508 308,502 318,488 326,462 335,472 344,448 355,462 368,462 388,466 396,478 405,498 412,500 422,490 438,516 447,498 460,478 474,440 483,478 492,482 508,445 518,440 527,426 536,440 544,480 560,470 578,460 588,462 605,490 613,523 622,510 630,650 639,728 648,740 657,778 665,798 674,830 683,858 692,930 700,966 709,912 718,888 726,900 736,878 744,888 753,862 765,850 779,852 787,800 796,742 805,845 813,810 822,785 832,770 848,735 856,728 870,742 884,708 900,715 915,692 938,665 946,668 953,612 962,608 980,615 988,600 997,614 1005,602 1015,610 1040,610 1050,600 1060,600 1067,582 1080,585 1100,585 1109,576 1120,585 1154,580 1162,614 1200,610 1212,612 1222,622 1240,602 1248,578 1258,545 1266,538 1276,552 1290,562 1310,568 1326,562 1335,528 1344,520 1354,540 1370,548 1380,578 1390,558 1420,555 1432,540 1440,538 1449,305 1458,480 1466,505 1476,428 1484,435 1493,470 1502,480 1510,522 1518,502 1527,525 1536,528 1545,515',
    '#d028d8': '20,645 45,625 65,585 90,550 110,530 125,518 145,518 158,532 175,543 200,545 230,538 260,530 300,522 320,502 335,488 350,465 360,460 385,466 405,475 425,490 445,503 462,495 480,475 495,470 515,465 536,442 560,455 580,465 600,463 612,475 622,495 640,575 655,665 665,740 683,800 700,880 710,905 726,920 744,890 765,868 780,860 796,822 810,815 822,792 838,792 856,758 884,730 900,722 915,705 945,678 965,645 988,612 1040,610 1080,595 1110,587 1154,583 1175,598 1195,611 1210,605 1240,608 1255,600 1270,575 1290,552 1326,563 1345,545 1370,538 1390,555 1410,560 1430,548 1440,550 1450,497 1466,480 1484,435 1493,463 1510,465 1520,480 1530,500 1545,515',
    '#0a960a': '20,640 45,638 60,620 95,580 115,550 135,530 175,528 205,538 240,540 280,532 310,522 335,502 360,482 396,468 420,472 450,490 490,486 515,475 533,455 565,458 590,454 605,460 620,475 632,500 650,560 665,620 680,680 695,750 710,825 722,855 735,875 750,890 765,895 778,885 796,855 820,828 866,768 884,760 900,740 945,700 965,670 1000,628 1030,610 1080,602 1120,588 1154,585 1190,597 1230,610 1248,608 1270,590 1300,573 1345,552 1410,548 1440,550 1450,528 1466,515 1484,485 1502,470 1526,465 1536,488 1545,490'
};

function drawDdx() {
    const svg = document.getElementById('ddx');
    const y = v => (v - 223) / 3;
    add(svg, 'rect', { x: .5, y: .5, width: 1055, height: 247, fill: 'none', stroke: '#ccc' });
    add(svg, 'text', { x: 4, y: 38, class: 'ddx-text' }, '5.39');
    add(svg, 'text', { x: 3, y: 245, class: 'ddx-text' }, '-29.26');
    for (let i = 0; i < 176; i++) {
        const v = bars[i] || ((i * 7) % 5 < 3 ? 343 : 334);
        const up = v < 338;
        add(svg, 'rect', {
            x: dayX(i) - 2.5, y: up ? y(v) : y(338), width: 5, height: Math.abs(v - 338) / 3,
            fill: up ? RED : GREEN
        });
    }
    for (const color in ddxLines) {
        const points = ddxLines[color].split(' ').map(p => {
            const [x, v] = p.split(',');
            return (x / 1.452 - 12) + ',' + y(v);
        }).join(' ');
        add(svg, 'polyline', { points, fill: 'none', stroke: color, 'stroke-width': 3, 'stroke-linejoin': 'round' });
    }
}

function drawAxis() {
    const svg = document.getElementById('axis');
    for (let i = 28; i < 176; i++) {
        const long = i === 57 || i === 116 || i === 175;
        add(svg, 'path', {
            d: `M${dayX(i)} 2V${long ? 17 : 11}`, stroke: '#777',
            'stroke-width': long ? 2.5 : 1.5, opacity: Math.min(1, (i - 26) / 14)
        });
    }
    add(svg, 'text', { x: 5, y: 50, class: 'date-text' }, '20250113');
    add(svg, 'text', { x: 345, y: 50, class: 'date-text', 'text-anchor': 'middle' }, '20250411');
    add(svg, 'text', { x: 700, y: 50, class: 'date-text', 'text-anchor': 'middle' }, '20250710');
    add(svg, 'text', { x: 1054, y: 50, class: 'date-text', 'text-anchor': 'end' }, '20251009');
}

drawKline();
drawDdx();
drawAxis();
```
